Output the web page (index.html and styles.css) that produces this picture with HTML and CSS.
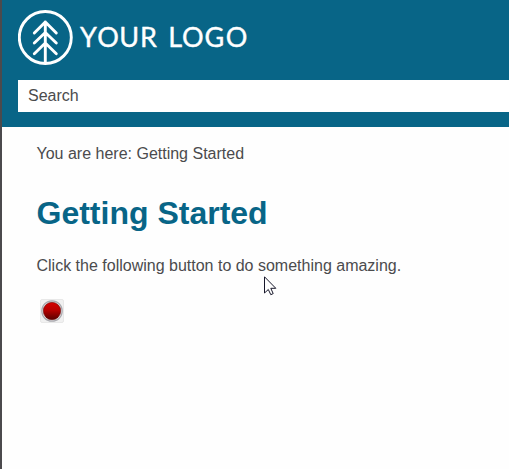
FILE: index.html
```
<!DOCTYPE html>
<html lang="en">
<head>
<meta charset="utf-8">
<title>Getting Started</title>
<link rel="stylesheet" href="styles.css">
</head>
<body>
<header class="header">
  <svg class="logo" width="232" height="56" viewBox="0 0 232 56" role="img" aria-label="Your Logo">
    <g class="logo-lines">
      <circle cx="27.3" cy="27.5" r="26"/>
      <path d="M27.3 12V53M16.3 23L27.3 12L38.3 23M16.3 33L27.3 22.5L38.3 33M16.3 43.7L27.3 33L38.3 43.7"/>
    </g>
    <text class="logo-text" x="62 79.3 101.3 122 142 150.3 164 186.5 207.8" y="37">YOUR LOGO</text>
  </svg>
  <input class="search" type="text" placeholder="Search" aria-label="Search">
</header>
<main class="content">
  <p class="breadcrumbs">You are here: Getting Started</p>
  <h1 class="title">Getting Started</h1>
  <p class="intro">Click the following button to do something amazing.</p>
  <button class="action" aria-label="Start">
    <svg width="24" height="24" viewBox="0 0 24 24">
      <defs><linearGradient id="red" x1="0" y1="0" x2="0" y2="1"><stop offset="0" stop-color="#d40000"/><stop offset=".45" stop-color="#b80000"/><stop offset="1" stop-color="#580000"/></linearGradient></defs>
      <rect x=".5" y=".5" width="23" height="23" rx="1.5" fill="#f1f1f1" stroke="#e8e8e8"/>
      <circle cx="12" cy="12" r="10.2" fill="#eee" stroke="#aaaab0" stroke-width="1.2"/>
      <circle cx="12" cy="12" r="8.7" fill="url(#red)" stroke="#680808" stroke-width=".6"/>
    </svg>
  </button>
</main>
<svg class="pointer" width="13" height="20" viewBox="0 0 13 20"><path d="M.5.8V17L4.3 13.5L6.8 18.7L9.2 17.6L6.8 12.3H11.8Z"/></svg>
</body>
</html>
```
FILE: styles.css
```
* { box-sizing: border-box; }
body {
  margin: 0;
  min-height: 469px;
  overflow: hidden;
  border-left: 2px solid #4b4a4d;
  background: #fefefe;
  color: #4b4b4d;
  font: 16px/20px "Liberation Sans", Arial, sans-serif;
}
.header {
  height: 127px;
  padding: 10px 0 0 16px;
  background: #086587;
}
.logo { display: block; }
.logo-lines {
  fill: none;
  stroke: #fff;
  stroke-width: 2.9;
  stroke-linecap: round;
  stroke-linejoin: round;
}
.logo-text {
  fill: #fff;
  font: 27px Lato, sans-serif;
  stroke: #fff;
  stroke-width: .4px;
  stroke-linejoin: round;
}
.search {
  display: block;
  width: 100%;
  height: 32px;
  margin-top: 14px;
  padding: 0 10px;
  border: 0;
  border-radius: 0;
  background: #fff;
  font: inherit;
}
.search::placeholder { color: #4b4b4d; opacity: 1; }
.content { padding: 17px 0 0 34.5px; }
.breadcrumbs, .intro { margin: 0; }
.title {
  margin: 29px 0 23px;
  color: #086587;
  font-size: 32px;
  line-height: 40px;
}
.action {
  display: block;
  width: 24px;
  height: 24px;
  margin: 23px 0 0 3.5px;
  padding: 0;
  border: 0;
  background: none;
}
.action svg { display: block; }
.pointer {
  position: absolute;
  left: 264px;
  top: 276px;
  fill: #fff;
  stroke: #17172a;
  stroke-width: 1;
}
```
